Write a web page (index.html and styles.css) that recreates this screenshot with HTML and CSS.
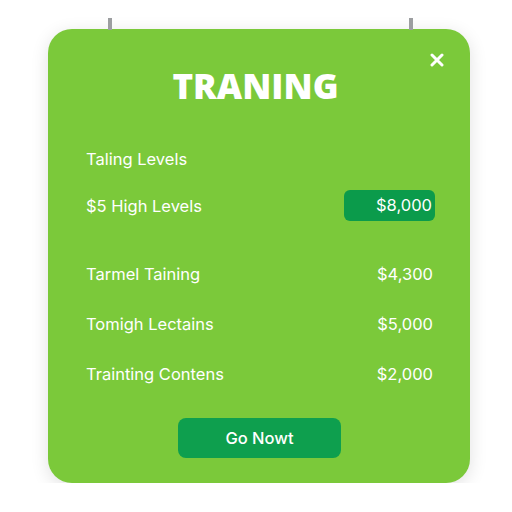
FILE: index.html
```html
<!DOCTYPE html>
<html lang="en">
<head>
  <meta charset="UTF-8">
  <meta name="viewport" content="width=device-width, initial-scale=1.0">
  <title>Traning</title>
  <link rel="stylesheet" href="styles.css">
</head>
<body>
  <div class="page">
    <div class="card">
      <!-- hanging rods above the card -->
      <span class="rod rod-left"></span>
      <span class="rod rod-right"></span>

      <button class="close" aria-label="Close">
        <svg width="14" height="14" viewBox="0 0 14 14">
          <path d="M2 2 L12 12 M12 2 L2 12" stroke="#fff" stroke-width="3" stroke-linecap="round"/>
        </svg>
      </button>

      <h1 class="title">TRANING</h1>

      <div class="heading">Taling Levels</div>

      <div class="row row-active">
        <span class="label">$5 High Levels</span>
        <span class="value badge">$8,000</span>
      </div>

      <div class="list">
        <div class="row">
          <span class="label">Tarmel Taining</span>
          <span class="value">$4,300</span>
        </div>
        <div class="row">
          <span class="label">Tomigh Lectains</span>
          <span class="value">$5,000</span>
        </div>
        <div class="row">
          <span class="label">Trainting Contens</span>
          <span class="value">$2,000</span>
        </div>
      </div>

      <div class="actions">
        <button class="go-button">Go Nowt</button>
      </div>
    </div>
  </div>
</body>
</html>
```

FILE: styles.css
```css
body {
  margin: 0;
  padding: 0;
  background-color: #fff;
  font-family: Inter, "Noto Sans", Arial, sans-serif;
}

.page {
  padding: 29px 42px 0 48px;
}

.card {
  position: relative;
  width: 422px;
  height: 454px;
  box-sizing: border-box;
  padding: 37px 35px 0 38px;
  background-color: #7bc93a;
  border-radius: 24px;
  box-shadow: 0 4px 18px rgba(0, 0, 0, 0.12);
  color: #fff;
}

.rod {
  position: absolute;
  top: -11px;
  width: 4px;
  height: 12px;
  background-color: #9c9ea0;
}

.rod-left {
  left: 60px;
}

.rod-right {
  left: 361px;
}

.close {
  position: absolute;
  top: 24px;
  right: 26px;
  padding: 0;
  border: none;
  background: none;
  cursor: pointer;
  line-height: 0;
}

.title {
  margin: 0;
  padding-right: 10px;
  height: 40px;
  line-height: 40px;
  text-align: center;
  font-family: "Open Sans", sans-serif;
  font-size: 35px;
  font-weight: 800;
}

.heading {
  margin-top: 41px;
  line-height: 24px;
  font-size: 16.5px;
}

.row {
  display: flex;
  align-items: center;
  justify-content: space-between;
  font-size: 16.5px;
  line-height: 24px;
}

.row-active {
  margin-top: 19px;
  height: 31px;
}

.value {
  padding-right: 2px;
}

.badge {
  width: 91px;
  height: 31px;
  line-height: 31px;
  box-sizing: border-box;
  padding-right: 3px;
  text-align: right;
  background-color: #0b9b4b;
  border-radius: 6px;
}

.list {
  margin-top: 28px;
}

.list .row {
  height: 50px;
}

.actions {
  display: flex;
  justify-content: center;
  margin-top: 19px;
  padding-right: 2px;
}

.go-button {
  width: 163px;
  height: 40px;
  border: none;
  border-radius: 8px;
  background-color: #0e9f4e;
  color: #fff;
  font-family: inherit;
  font-size: 16.5px;
  font-weight: 500;
  cursor: pointer;
}
```
